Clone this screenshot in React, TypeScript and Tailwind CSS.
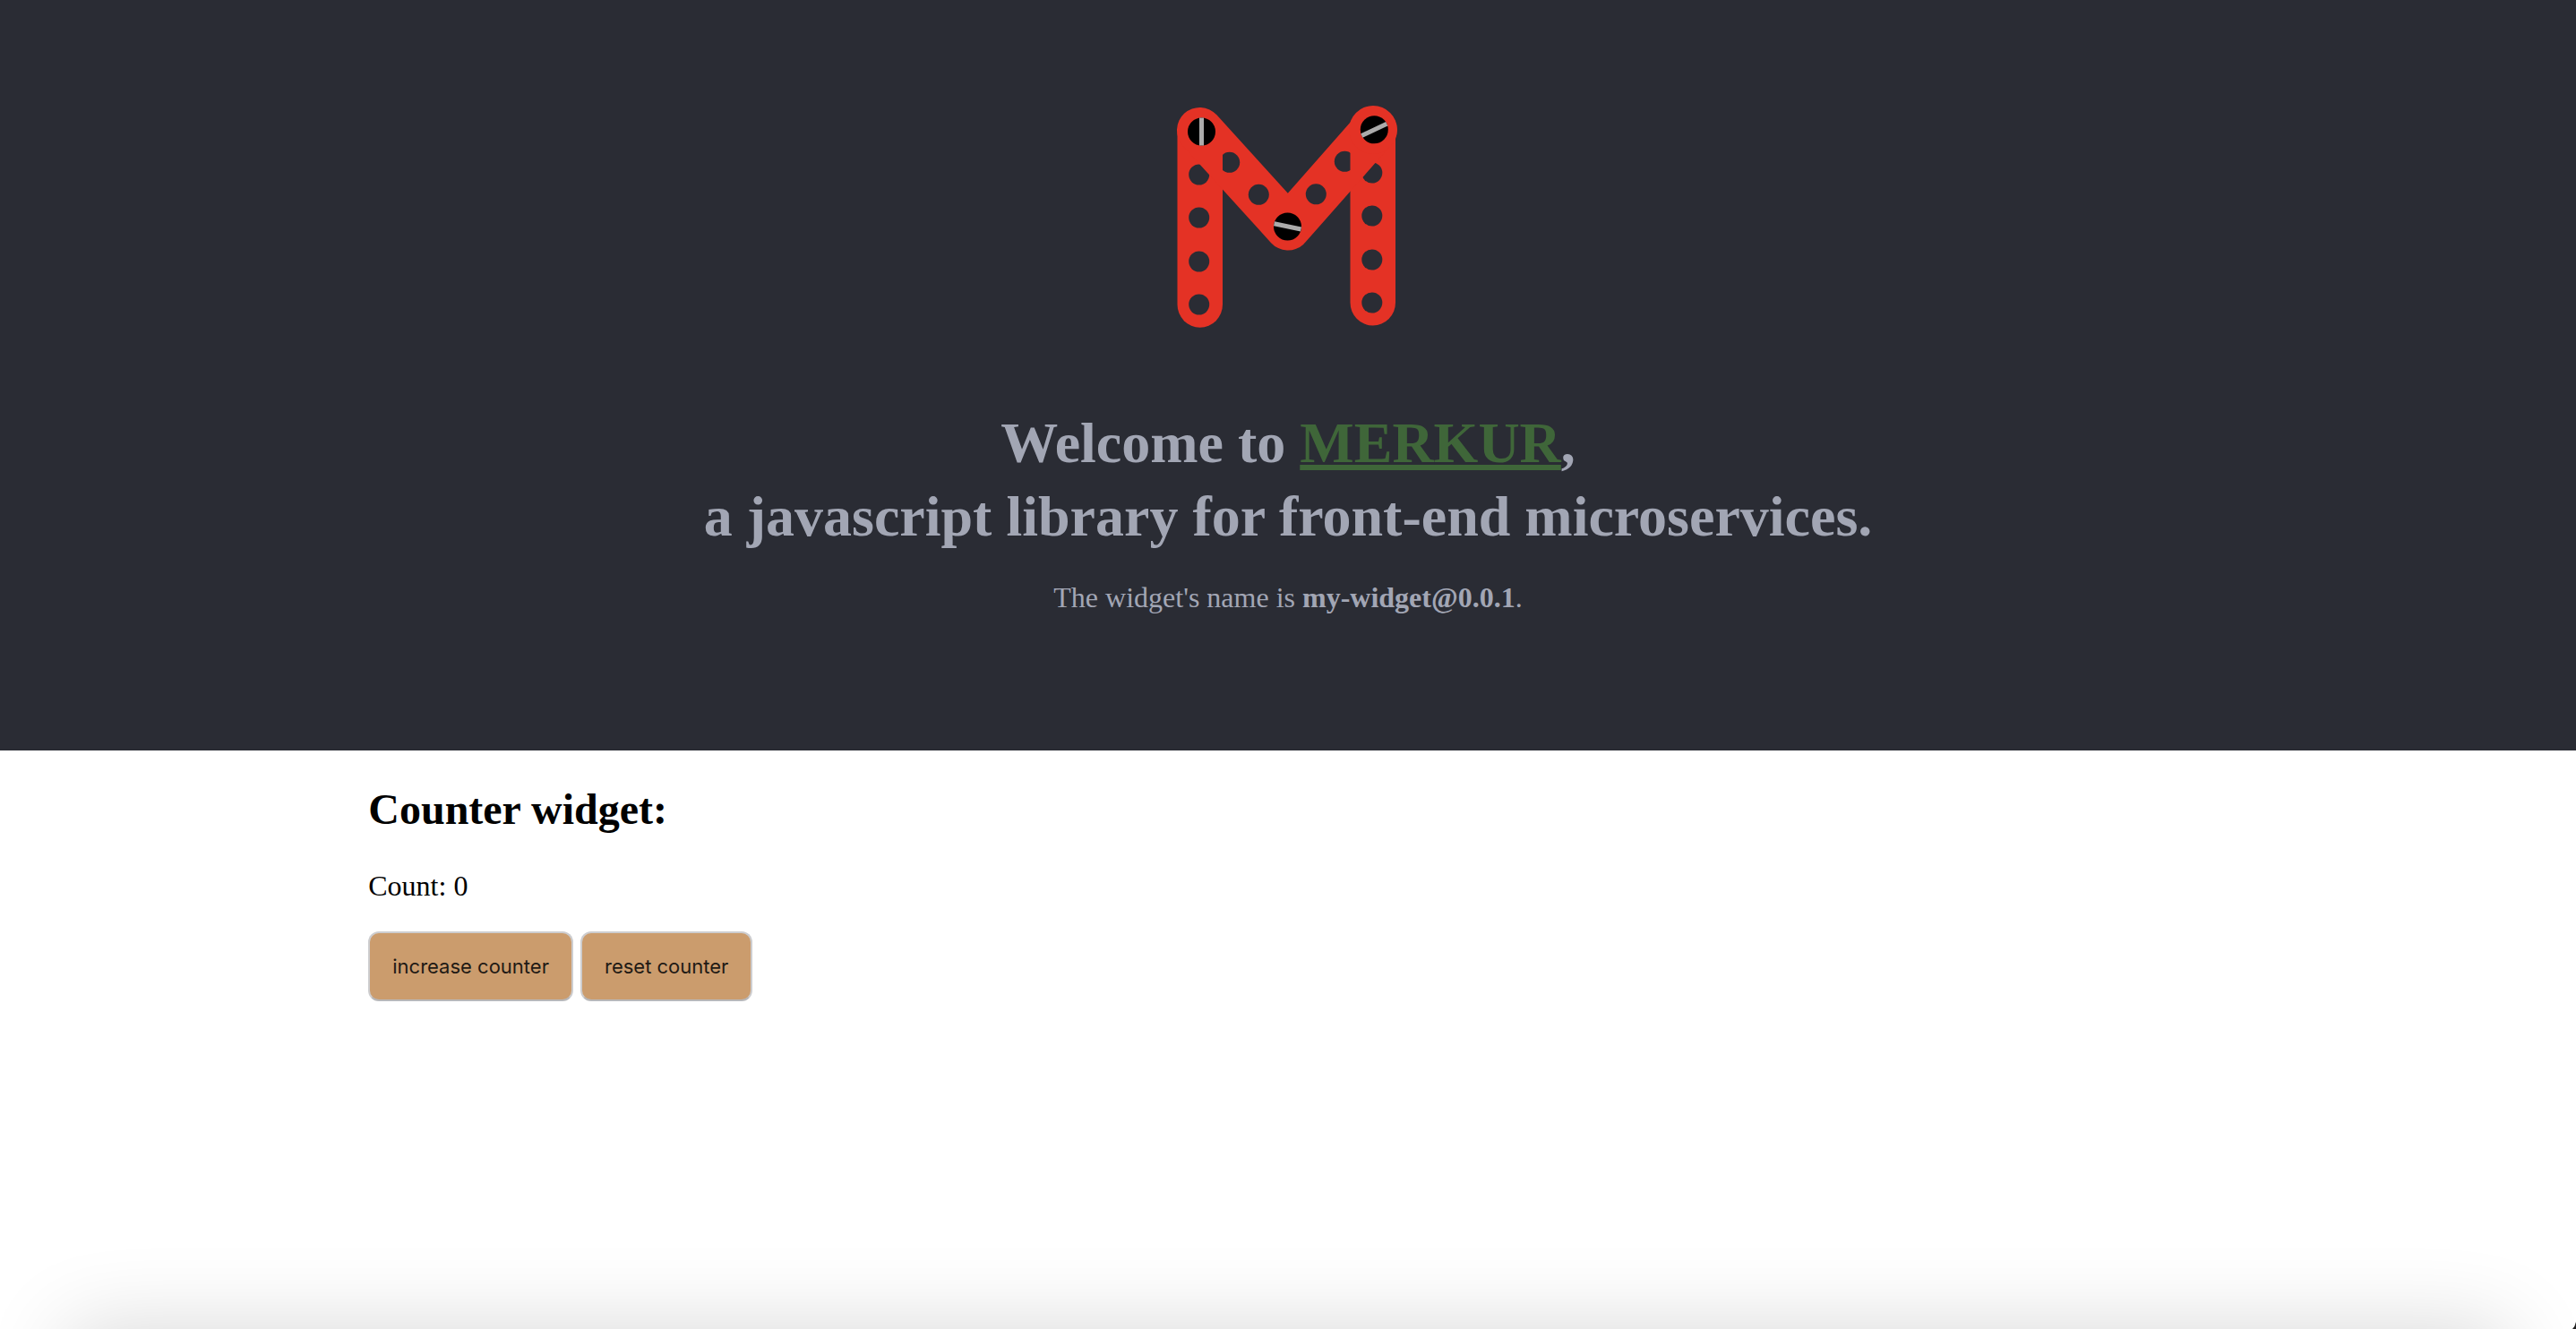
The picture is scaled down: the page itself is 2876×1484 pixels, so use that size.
import { useState } from 'react';

const BAR_HOLES = [195, 243, 292, 340];

function Logo() {
  return (
    <svg viewBox="1308 112 260 260" className="block size-[260px]" role="img" aria-label="Merkur logo">
      <g fill="#e43225">
        <path d="M1314.5 145V340A25.25 25.7 0 0 0 1365 340V145Z" />
        <path d="M1507.5 145V338A25.25 25.5 0 0 0 1558 338V145Z" />
      </g>
      <g fill="#2a2c34">
        {BAR_HOLES.map((y) => (
          <circle key={y} cx="1338.7" cy={y} r="11.5" />
        ))}
        {BAR_HOLES.map((y) => (
          <circle key={y} cx="1531.8" cy={y - 2} r="11.5" />
        ))}
      </g>
      <path
        d="M1339.5 145.5 1438 254 1534 145"
        fill="none"
        stroke="#e43225"
        strokeWidth="51"
        strokeLinecap="round"
        strokeLinejoin="round"
      />
      <circle cx="1533" cy="145" r="27" fill="#e43225" />
      <g fill="#2a2c34">
        <circle cx="1372.7" cy="181.3" r="11.5" />
        <circle cx="1405.3" cy="217.3" r="11.5" />
        <circle cx="1501.3" cy="180.3" r="11.5" />
        <circle cx="1469.3" cy="216.8" r="11.5" />
      </g>
      <path d="M1355 166H1365V196H1355ZM1507.5 166H1516V194H1507.5Z" fill="#e43225" />
      <g>
        <circle cx="1341.5" cy="147" r="15.5" />
        <circle cx="1534.3" cy="144.8" r="15.5" />
        <circle cx="1437.5" cy="253" r="15.5" />
      </g>
      <path
        d="M1341.5 131.5V162.5M1520.3 151.5 1548.3 138.2M1422.5 249.8 1452.5 256"
        stroke="#ababab"
        strokeWidth="5"
      />
    </svg>
  );
}

const buttonClass =
  'rounded-xl border-2 border-[#cdcdcf] border-b-[#b8b8ba] bg-[#cb9c6d] px-[25px] h-[78px] font-["Inter",sans-serif] text-[22px] leading-7 text-[#1f1a15]';

export default function App() {
  const [count, setCount] = useState(0);

  return (
    <div className='relative flex min-h-screen flex-col overflow-hidden bg-white font-["Liberation_Serif",serif] text-[32px] leading-[42px] text-black'>
      <header className="flex flex-col items-center bg-[#2a2c34] pt-28 pb-[150px] text-center text-[#a2a6b4]">
        <Logo />
        <h1 className="mt-[82px] text-[64px] leading-[82px] font-bold">
          Welcome to{' '}
          <a href="#merkur" className="text-[#3f6639] underline decoration-[6px]">
            MERKUR
          </a>
          ,<br />a javascript library for front-end microservices.
        </h1>
        <p className="mt-7">
          The widget's name is <strong>my-widget@0.0.1</strong>.
        </p>
      </header>

      <main className="flex flex-col px-[14.3%] pt-[35px]">
        <h2 className="text-5xl leading-[62px] font-bold">Counter widget:</h2>
        <p className="mt-[33px]">Count: {count}</p>
        <div className="mt-[30px] flex gap-2">
          <button type="button" className={buttonClass} onClick={() => setCount(count + 1)}>
            increase counter
          </button>
          <button type="button" className={buttonClass} onClick={() => setCount(0)}>
            reset counter
          </button>
        </div>
      </main>

      <div className="pointer-events-none absolute inset-x-[76px] top-full h-40 shadow-[0_0_96px_rgba(0,0,0,0.16)]" />
      <svg viewBox="0 0 4 8" className="pointer-events-none absolute right-0 bottom-0 h-2 w-1" aria-hidden="true">
        <path d="M4 0V8H0Q3 5 4 0Z" fill="#222" />
      </svg>
    </div>
  );
}
